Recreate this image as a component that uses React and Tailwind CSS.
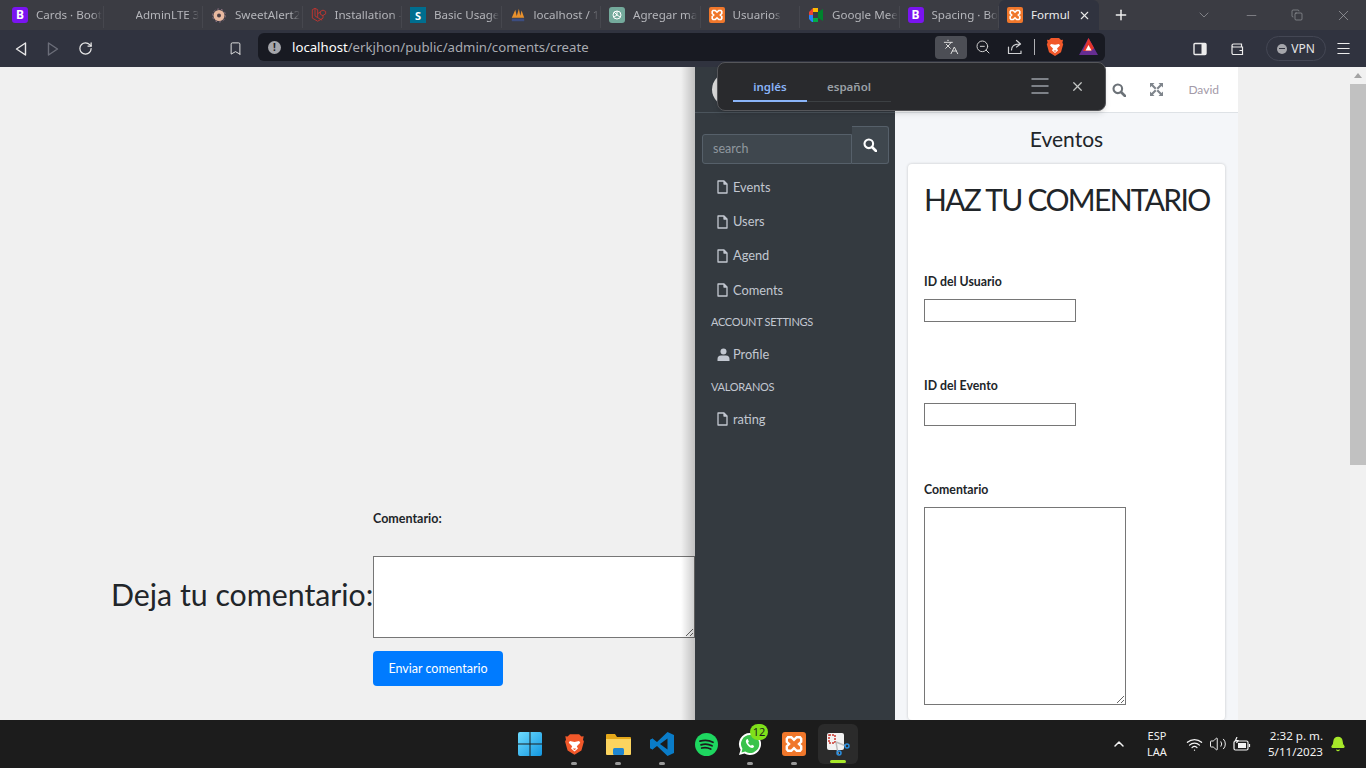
import React from 'react';
import { X, Plus, ChevronDown, Minus, ChevronUp, Wifi, Volume2, Bell, Menu, ZoomOut, Bookmark, RotateCw, Languages, Copy } from 'lucide-react';

const XamppIcon = ({ size = 16 }) => (
  <svg width={size} height={size} viewBox="0 0 16 16">
    <rect width="16" height="16" rx="2" fill="#f0772b" />
    <path d="M4 3.500h2.200L8 5.200l1.800-1.700H12l.8 1v2L11.300 8l1.500 1.500v2l-.8 1H9.800L8 10.800l-1.800 1.700H4l-.8-1v-2L4.700 8 3.200 6.500v-2z" fill="none" stroke="#fff" strokeWidth="1.600" />
  </svg>
);

const BootstrapIcon = () => (
  <div className="w-4 h-4 rounded-[3px] bg-[#7a14f0] flex items-center justify-center text-white text-[12px] font-bold leading-none">B</div>
);

const SweetIcon = () => (
  <svg width="16" height="16" viewBox="0 0 16 16">
    <circle cx="8" cy="8.500" r="5.500" fill="#e8b9a0" />
    <circle cx="8" cy="8.500" r="2" fill="#4a3f45" />
    <circle cx="8" cy="8.500" r="6.500" fill="none" stroke="#8a6f80" strokeWidth="1" strokeDasharray="2 2" />
  </svg>
);

const LaravelIcon = () => (
  <svg width="18" height="18" viewBox="0 0 18 18" fill="none" stroke="#c5352f" strokeWidth="1">
    <path d="M1.500 3l3-1.500 3 1.500v9l5 2.800M1.500 3v9.500l6 3.500 6-3.400v-3.100l3-1.800V5l-3-1.500L10.500 5v3.200l3 1.600M7.500 7.500l3-1.800M4.500 1.500v8.500l3 2" />
  </svg>
);

const SiteIcon = () => (
  <div className="w-4 h-4 bg-[#006e8f] flex items-center justify-center text-white text-[11px] font-bold leading-none">S</div>
);

const PmaIcon = () => (
  <svg width="18" height="18" viewBox="0 0 18 18">
    <path d="M2 12L6 3l2 9zM7 12l3-10 2 10zM11 12l2-8 3 8z" fill="#e8912d" />
    <rect x="2" y="13" width="14" height="3" fill="#3c4d80" />
  </svg>
);

const GptIcon = () => (
  <div className="w-4 h-4 rounded-[3px] bg-[#74aa9c] flex items-center justify-center">
    <svg width="12" height="12" viewBox="0 0 12 12" fill="none" stroke="#fff" strokeWidth="1">
      <circle cx="6" cy="6" r="4" />
      <path d="M6 2v4l3 2M6 6l-3 2M3 3l3 3" />
    </svg>
  </div>
);

const MeetIcon = () => (
  <svg width="16" height="16" viewBox="0 0 16 16">
    <path d="M1 5l4-4h5v4H5v3H1z" fill="#ea4335" />
    <path d="M1 8h4v3h5v4H4l-3-3z" fill="#2684fc" />
    <path d="M5 1h5v4H5z" fill="#ffba00" />
    <path d="M5 11h5v4H5z" fill="#00ac47" />
    <path d="M10 5v6l5 3V2z" fill="#00832d" />
  </svg>
);

const BraveIcon = ({ size = 18 }) => (
  <svg width={size} height={size} viewBox="0 0 18 20">
    <path d="M5 1h8l2 2 2-.2-.6 3 .8 1.500-2.200 8L9 19l-6-3.700L.8 7.300l.8-1.500L1 2.800 3 3z" fill="#f1582a" />
    <path d="M5 7l4 .8L13 7l1 1.500-3 3 1 2-3 2.500-3-2.500 1-2-3-3z" fill="#fff" />
    <path d="M7.500 13.500h3L9 15z" fill="#f1582a" />
  </svg>
);

const RewardsIcon = () => (
  <svg width="19" height="18" viewBox="0 0 19 18">
    <path d="M9.500 0L19 17H0z" fill="#662d91" />
    <path d="M9.500 0L15 10 12 13H4z" fill="#e5352b" />
    <path d="M9.500 7l3 5.500h-6z" fill="#fff" />
  </svg>
);

const ShareArrow = () => (
  <svg width="16" height="16" viewBox="0 0 16 16" fill="none" stroke="#cfd0d3" strokeWidth="1.200" strokeLinejoin="round" strokeLinecap="round">
    <path d="M1.500 8v6.500h12.500v-2.500" />
    <path d="M4.500 11c0-4 3-6 8-6M9.500 1.500l4 3.500-4 3" />
  </svg>
);

const FileIcon = () => (
  <svg width="11" height="14" viewBox="0 0 11 14" fill="none" stroke="#c2c7d0" strokeWidth="1.300" strokeLinejoin="round" className="shrink-0">
    <path d="M1 1h6l3 3v9H1z" />
    <path d="M7 1v3h3" fill="#c2c7d0" />
  </svg>
);

const SolidSearch = ({ size = 14, color = '#fff' }) => (
  <svg width={size} height={size} viewBox="0 0 14 14" fill="none" stroke={color}>
    <circle cx="5.800" cy="5.800" r="4.300" strokeWidth="2.100" />
    <path d="M9 9l4 4" strokeWidth="2.600" strokeLinecap="round" />
  </svg>
);

const ExpandArrows = () => (
  <svg width="13" height="13" viewBox="0 0 13 13" fill="#7f858c">
    <path d="M0 0h4.500L3 1.500 6.500 5 5 6.500 1.500 3 0 4.500zM13 0v4.500L11.500 3 8 6.500 6.500 5 10 1.500 8.500 0zM0 13V8.500L1.500 10 5 6.500 6.500 8 3 11.500 4.500 13zM13 13H8.500l1.500-1.500L6.500 8 8 6.500l3.500 3.500L13 8.500z" />
  </svg>
);

const tabs = [
  { icon: <BootstrapIcon />, title: 'Cards · Boot' },
  { icon: <div className="w-4 h-4" />, title: 'AdminLTE 3' },
  { icon: <SweetIcon />, title: 'SweetAlert2' },
  { icon: <LaravelIcon />, title: 'Installation -' },
  { icon: <SiteIcon />, title: 'Basic Usage' },
  { icon: <PmaIcon />, title: 'localhost / 1' },
  { icon: <GptIcon />, title: 'Agregar ma' },
  { icon: <XamppIcon />, title: 'Usuarios' },
  { icon: <MeetIcon />, title: 'Google Mee' },
  { icon: <BootstrapIcon />, title: 'Spacing · Bo' },
];

const TabStrip = () => (
  <div className="h-[30px] bg-[#3b3c43] flex items-end pl-1 text-[11.600px] font-['Noto_Sans',sans-serif]">
    {tabs.map((tab, index) => (
      <div key={index} className="w-[99.500px] h-[30px] flex items-center pl-2 pr-1 gap-2 shrink-0 relative">
        <div className="w-4 flex justify-center shrink-0">{tab.icon}</div>
        <span className="text-[#b4b5ba] whitespace-nowrap [mask-image:linear-gradient(to_right,black_85%,transparent)]">{tab.title}</span>
        <div className="absolute right-0 top-[6px] bottom-[2px] w-px bg-[#46474e]" />
      </div>
    ))}
    <div className="w-[99.500px] h-[30px] bg-[#30333f] rounded-t-md flex items-center pl-2 pr-2 gap-2 shrink-0">
      <XamppIcon />
      <span className="text-[#eceded] whitespace-nowrap w-[36px]">Formul</span>
      <X size={13} className="text-[#e8e8e8] shrink-0 ml-auto" />
    </div>
    <div className="w-[44px] h-[30px] flex items-center justify-center">
      <Plus size={16} strokeWidth={2.200} className="text-[#f0f0f0]" />
    </div>
    <div className="ml-auto h-[30px] flex items-center text-[#a3a4a9]">
      <div className="w-[46px] flex justify-center"><ChevronDown size={16} strokeWidth={1} /></div>
      <div className="w-[46px] flex justify-center ml-[1px]"><Minus size={15} strokeWidth={1} /></div>
      <div className="w-[46px] flex justify-center"><Copy size={12} strokeWidth={1.200} /></div>
      <div className="w-[46px] flex justify-center"><X size={17} strokeWidth={1} /></div>
    </div>
  </div>
);

const Toolbar = () => (
  <div className="h-[37px] bg-[#30333f] flex items-center font-['Noto_Sans',sans-serif]">
    <div className="w-[258px] flex items-center shrink-0 text-[#e8e8e8]">
      <svg width="14" height="16" viewBox="0 0 14 16" fill="none" stroke="currentColor" strokeWidth="1.400" className="ml-[14px]">
        <path d="M11.500 2L2.500 8l9 6z" strokeLinejoin="round" />
      </svg>
      <svg width="14" height="16" viewBox="0 0 14 16" fill="none" stroke="#6b6e79" strokeWidth="1.400" className="ml-[18px]">
        <path d="M2.500 2l9 6-9 6z" strokeLinejoin="round" />
      </svg>
      <RotateCw size={15} strokeWidth={2} className="ml-[18px]" />
      <Bookmark size={15} strokeWidth={1.500} className="ml-[135px]" />
    </div>
    <div className="w-[847px] h-[28px] bg-[#181a22] rounded-md flex items-center shrink-0 pl-[10px] pr-[3px] mt-[-3px]">
      <div className="w-[13px] h-[13px] rounded-full bg-[#a5a6ab] flex items-center justify-center text-[#181a22] text-[10px] font-bold leading-none">!</div>
      <span className="ml-[11px] mt-[2px] text-[13.200px] text-[#a9abb1] whitespace-nowrap"><span className="text-white">localhost</span>/erkjhon/public/admin/coments/create</span>
      <div className="ml-auto w-[32px] h-[23px] rounded bg-[#4c4e55] flex items-center justify-center text-[#dcdcdc]">
        <Languages size={16} strokeWidth={1.500} />
      </div>
      <div className="w-[32px] flex justify-center text-[#d0d0d0]"><ZoomOut size={16} strokeWidth={1.500} /></div>
      <div className="w-[32px] flex justify-center"><ShareArrow /></div>
      <div className="w-px h-[16px] bg-[#b0b1b5] ml-[3px]" />
      <div className="w-[39px] flex justify-center"><BraveIcon size={20} /></div>
      <div className="w-[28px] flex justify-center"><RewardsIcon /></div>
    </div>
    <div className="flex items-center text-[#ececec]">
      <svg width="14" height="14" viewBox="0 0 14 14" className="ml-[88px]">
        <rect x="1" y="1.500" width="12" height="11" fill="none" stroke="currentColor" strokeWidth="1.400" rx="1" />
        <rect x="8.500" y="1.500" width="4.500" height="11" fill="currentColor" />
      </svg>
      <svg width="15" height="14" viewBox="0 0 15 14" fill="none" stroke="currentColor" strokeWidth="1.200" className="ml-[23px]">
        <path d="M2 3.500V11a1.500 1.500 0 0 0 1.500 1.500h9V5H3.500A1.500 1.500 0 0 1 2 3.500zm0 0A1.500 1.500 0 0 1 3.500 2h8v3M9.500 8.500h3" />
      </svg>
      <div className="ml-[21px] w-[60px] h-[25px] rounded-full border border-[#444754] flex items-center justify-center gap-1 text-[12px] text-[#e6e6e6]">
        <div className="w-[10px] h-[10px] rounded-full bg-[#a5a6ab] flex items-center justify-center">
          <div className="w-[6px] h-[1.500px] bg-[#30333f]" />
        </div>
        VPN
      </div>
      <Menu size={17} strokeWidth={1.500} className="ml-[9px]" />
    </div>
  </div>
);

const TranslatePopup = () => (
  <div className="absolute z-20 left-[717px] top-[62px] w-[389px] h-[49px] bg-[#292a2d] border border-[#55565a] rounded-lg shadow-md flex items-start font-['Noto_Sans',sans-serif] text-[11.500px] font-semibold">
    <div className="ml-[15px] mt-[15px] flex flex-col w-[158px]">
      <div className="flex">
        <span className="w-[74px] text-center text-[#8ab4f8]">inglés</span>
        <span className="w-[84px] text-center text-[#9aa0a6]">español</span>
      </div>
      <div className="flex mt-[5px]">
        <div className="w-[74px] h-[2px] bg-[#8ab4f8]" />
        <div className="w-[84px] h-[1px] bg-[#3c4043] mt-[1px]" />
      </div>
    </div>
    <div className="ml-auto mr-[20px] mt-[11px] flex items-center text-[#9aa0a6]">
      <Menu size={24} strokeWidth={1.500} />
      <X size={15} strokeWidth={2} className="ml-[18px] text-[#c4c7c5]" />
    </div>
  </div>
);

const sidebarItems = [
  { label: 'Events' },
  { label: 'Users' },
  { label: 'Agend' },
  { label: 'Coments' },
];

const NavItem = ({ label, icon }) => (
  <div className="h-[34.400px] flex items-center pl-[22px] text-[12.800px] text-[#c2c7d0]">
    {icon || <FileIcon />}
    <span className="ml-[5px]">{label}</span>
  </div>
);

const Sidebar = () => (
  <div className="w-[200px] shrink-0 bg-[#343a40] z-10 font-['Lato',sans-serif]">
    <div className="h-[46px] border-b border-[#4b545c] pl-[17px] flex items-center">
      <div className="w-[33px] h-[33px] rounded-full bg-[#d8d8d8]" />
    </div>
    <div className="flex items-end pl-[7px] mt-[13px]">
      <div className="w-[150px] h-[30px] bg-[#3f474e] border border-[#56606a] rounded-l-[3px] flex items-center pl-[10px] text-[12.500px] text-[#8f979e]">search</div>
      <div className="w-[37px] h-[38px] bg-[#3f474e] border border-l-0 border-[#56606a] rounded-r-[3px] flex items-center justify-center">
        <SolidSearch />
      </div>
    </div>
    <div className="mt-[6px]">
      {sidebarItems.map((item) => <NavItem key={item.label} label={item.label} />)}
    </div>
    <div className="h-[30px] flex items-center pl-4 text-[11px] tracking-[-0.3px] text-[#c2c7d0]">ACCOUNT SETTINGS</div>
    <NavItem
      label="Profile"
      icon={<svg width="13" height="13" viewBox="0 0 13 13" fill="#c2c7d0" className="shrink-0 -mr-[2px]"><circle cx="6.500" cy="3.500" r="3" /><path d="M.5 13v-2a3.500 3.500 0 0 1 3.500-3.500h5a3.500 3.500 0 0 1 3.500 3.500v2z" /></svg>}
    />
    <div className="h-[30px] flex items-center pl-4 text-[11px] tracking-[-0.3px] text-[#c2c7d0]">VALORANOS</div>
    <NavItem label="rating" />
  </div>
);

const FormCard = () => (
  <div className="mx-[13px] bg-white rounded shadow-[0_0_3px_rgba(0,0,0,0.2)] pl-4 pt-[16px] h-[600px] text-[#212529]">
    <h1 className="text-[30px] tracking-[-1.700px] leading-[38px] whitespace-nowrap">HAZ TU COMENTARIO</h1>
    <label className="block mt-[55px] text-[12.300px] font-bold leading-[18px]">ID del Usuario</label>
    <input className="block mt-2 w-[152px] h-[23px] border border-[#767676] bg-white" />
    <label className="block mt-[55px] text-[12.300px] font-bold leading-[18px]">ID del Evento</label>
    <input className="block mt-2 w-[152px] h-[23px] border border-[#767676] bg-white" />
    <label className="block mt-[55px] text-[12.300px] font-bold leading-[18px]">Comentario</label>
    <textarea className="block mt-2 w-[202px] h-[198px] border border-[#767676] bg-white" />
  </div>
);

const LeftPanel = () => (
  <div className="w-[695px] shrink-0 bg-[#f0f0f0] flex items-end pl-[111px] pb-[34px] font-['Lato',sans-serif] text-[#212529] relative z-0 overflow-hidden">
    <div className="text-[30.300px] leading-[36px] mb-[74px] w-[262px] whitespace-nowrap">Deja tu comentario:</div>
    <div className="flex flex-col w-[322px] shrink-0">
      <label className="text-[12.500px] font-bold leading-[18px]">Comentario:</label>
      <textarea className="mt-[28px] w-[322px] h-[82px] border border-[#767676] bg-white" />
      <button className="mt-[13px] w-[130px] h-[35px] pt-[2px] rounded bg-[#007bff] text-white text-[12.500px]">Enviar comentario</button>
    </div>
    <div className="absolute right-0 top-0 bottom-0 w-[14px] bg-gradient-to-r from-transparent to-black/20" />
  </div>
);

const Main = () => (
  <div className="h-[653px] flex overflow-hidden">
    <LeftPanel />
    <Sidebar />
    <div className="w-[343px] shrink-0 flex flex-col bg-[#f4f6f9] font-['Lato',sans-serif]">
      <div className="h-[46px] shrink-0 bg-white border-b border-[#dee2e6] flex items-center justify-end pr-[19px]">
        <SolidSearch size={14} color="#6c7278" />
        <div className="ml-[24px] mr-[25px]"><ExpandArrows /></div>
        <span className="text-[12px] text-[#a39aa8]">David</span>
      </div>
      <div className="h-[51px] shrink-0 flex items-center justify-center text-[21px] text-[#212529]">Eventos</div>
      <FormCard />
    </div>
    <div className="flex-1 bg-[#f0f0f0]" />
    <div className="w-4 shrink-0 bg-[#f1f1f1] flex flex-col">
      <div className="h-[17px] flex items-center justify-center">
        <div className="w-0 h-0 border-x-[4px] border-x-transparent border-b-[5px] border-b-[#a3a3a3]" />
      </div>
      <div className="h-[381px] bg-[#c1c1c1]" />
    </div>
  </div>
);

const dockIcons = [
  { key: 'start', dot: false, icon: (
    <svg width="24" height="24" viewBox="0 0 24 24">
      <defs><linearGradient id="win" x1="0" y1="0" x2="1" y2="1"><stop offset="0" stopColor="#6fdcff" /><stop offset="1" stopColor="#1296e0" /></linearGradient></defs>
      <path d="M0 2a2 2 0 0 1 2-2h9.500v11.500H0zM12.500 0H22a2 2 0 0 1 2 2v9.500H12.500zM0 12.500h11.500V24H2a2 2 0 0 1-2-2zM12.500 12.500H24V22a2 2 0 0 1-2 2h-9.500z" fill="url(#win)" />
    </svg>
  ) },
  { key: 'brave', dot: true, icon: <BraveIcon size={23} /> },
  { key: 'files', dot: true, icon: (
    <svg width="25" height="22" viewBox="0 0 25 22">
      <path d="M0 2a1 1 0 0 1 1-1h8l2 3h13a1 1 0 0 1 1 1v3H0z" fill="#e5a81a" />
      <path d="M0 6h25v15a1 1 0 0 1-1 1H1a1 1 0 0 1-1-1z" fill="#fbd45f" />
      <rect x="7" y="15" width="11" height="7" rx="1.500" fill="#1f86d1" />
    </svg>
  ) },
  { key: 'vscode', dot: true, icon: (
    <svg width="24" height="24" viewBox="0 0 24 24">
      <path d="M17.500 0L24 3v18l-6.500 3L7 14l-4.500 3.500L0 16V8l2.500-1.500L7 10z" fill="#0a7cc8" />
      <path d="M17.500 6.500L10 12l7.500 5.500z" fill="#1c1c1c" />
      <path d="M0 8l2.500-1.500L6 12l-3.500 5.500L0 16l3-4z" fill="#0a7cc8" />
    </svg>
  ) },
  { key: 'spotify', dot: false, icon: (
    <svg width="23" height="23" viewBox="0 0 23 23">
      <circle cx="11.500" cy="11.500" r="11.500" fill="#1ed760" />
      <path d="M5 8.200c4-1.200 9-1 13 1M6 11.800c3.500-1 7.500-.8 11 1M6.700 15c3-.8 6-.6 9 1" fill="none" stroke="#1c1c1c" strokeWidth="1.800" strokeLinecap="round" />
    </svg>
  ) },
  { key: 'whatsapp', dot: true, icon: (
    <div className="relative">
      <svg width="24" height="24" viewBox="0 0 24 24">
        <path d="M12 1a11 11 0 0 0-9.400 16.700L1 23l5.500-1.500A11 11 0 1 0 12 1z" fill="#fff" />
        <path d="M12 3a9 9 0 0 0-7.600 13.800L3.500 20.500l3.800-1A9 9 0 1 0 12 3z" fill="#3ac34c" />
        <path d="M8.500 7.500c-1 1-1 3 1 5.500s4.500 3.500 6 2.500l.7-1.500-2.200-1.300-1 1c-1-.3-2.500-1.800-3-3l.9-1L9.800 7z" fill="#fff" />
      </svg>
      <div className="absolute left-[12px] top-[-8px] w-[18px] h-[16px] rounded-full bg-[#7fe01a] text-[#1c1c1c] text-[11px] leading-[16px] text-center">12</div>
    </div>
  ) },
  { key: 'xampp', dot: true, icon: <XamppIcon size={24} /> },
];

const Taskbar = () => (
  <div className="h-[48px] bg-[#1c1c1c] flex items-center relative font-['Noto_Sans',sans-serif] text-[#f2f2f2]">
    <div className="ml-[508px] flex items-center">
      {dockIcons.map((item) => (
        <div key={item.key} className="w-[44px] h-[40px] flex items-center justify-center relative">
          {item.icon}
          {item.dot && <div className="absolute bottom-[-1px] left-[19px] w-[6px] h-[3px] rounded-full bg-[#9a9a9a]" />}
        </div>
      ))}
      <div className="w-[40px] h-[40px] ml-[2px] rounded-md bg-[#2b2b2b] flex items-center justify-center relative">
        <svg width="24" height="24" viewBox="0 0 24 24">
          <rect x="1" y="1" width="17" height="17" rx="2" fill="#f2f2f2" />
          <rect x="3" y="3" width="6" height="8" fill="none" stroke="#c9352b" strokeWidth="1.500" strokeDasharray="2 1" />
          <path d="M10 10l10 4M10 10l2 12" stroke="#bbb" strokeWidth="1.500" />
          <circle cx="21" cy="14" r="2" fill="none" stroke="#2a8fe0" strokeWidth="1.500" />
          <circle cx="13" cy="21" r="2" fill="none" stroke="#2a8fe0" strokeWidth="1.500" />
        </svg>
        <div className="absolute bottom-[1px] left-[12px] w-[16px] h-[3px] rounded-full bg-[#a7e82a]" />
      </div>
    </div>
    <div className="absolute left-[1111px] top-0 h-[48px] flex items-center">
      <ChevronUp size={16} strokeWidth={2.200} />
      <div className="text-[11px] leading-[16px] text-center w-[28px] ml-[16px]">ESP<br />LAA</div>
      <Wifi size={17} strokeWidth={1.800} className="ml-[15px]" />
      <Volume2 size={18} strokeWidth={1.300} className="ml-[6px]" />
      <svg width="18" height="14" viewBox="0 0 18 14" fill="none" stroke="#f2f2f2" strokeWidth="1.200" className="ml-[6px]">
        <rect x="1" y="4" width="14" height="9" rx="1.500" />
        <rect x="5" y="6" width="8" height="5" fill="#f2f2f2" stroke="none" />
        <path d="M16.500 7v3" />
        <path d="M4 0L2.500 3.500h2.500L3.500 6" />
      </svg>
      <div className="text-[11.600px] leading-[16px] text-right ml-[16px] w-[56px] whitespace-nowrap">2:32 p. m.<br />5/11/2023</div>
      <Bell size={16} fill="#a7e82a" stroke="#a7e82a" className="ml-[7px]" />
    </div>
  </div>
);

const App = () => (
  <div className="w-[1366px] h-[768px] overflow-hidden relative bg-[#f0f0f0]">
    <TabStrip />
    <Toolbar />
    <Main />
    <Taskbar />
    <TranslatePopup />
  </div>
);

export default App;
